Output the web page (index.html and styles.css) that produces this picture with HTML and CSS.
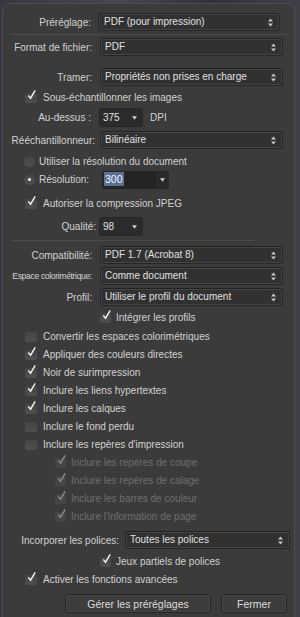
FILE: index.html
```html
<!DOCTYPE html>
<html lang="fr">
<head>
	<meta charset="UTF-8">
	<title>Exporter PDF</title>
	<link rel="stylesheet" href="styles.css">
</head>
<body>
<div class="window">

	<div class="row field-row preset">
		<span class="lbl">Préréglage:</span>
		<div class="popup">PDF (pour impression)<svg class="updown" viewBox="0 0 5 9"><polygon points="0,3.5 2.5,0.5 5,3.5"/><polygon points="0,5.5 2.5,8.5 5,5.5"/></svg></div>
	</div>
	<div class="sep"></div>

	<div class="row field-row r-format">
		<span class="lbl">Format de fichier:</span>
		<div class="popup">PDF<svg class="updown" viewBox="0 0 5 9"><polygon points="0,3.5 2.5,0.5 5,3.5"/><polygon points="0,5.5 2.5,8.5 5,5.5"/></svg></div>
	</div>

	<div class="row field-row r-tramer">
		<span class="lbl">Tramer:</span>
		<div class="popup">Propriétés non prises en charge<svg class="updown" viewBox="0 0 5 9"><polygon points="0,3.5 2.5,0.5 5,3.5"/><polygon points="0,5.5 2.5,8.5 5,5.5"/></svg></div>
	</div>

	<div class="row check-row r-tight">
		<span class="box on"><svg class="tick" viewBox="0 0 12 12"><path d="M2.5 6.5 L5 9.5 L10 1"/></svg></span>
		<span>Sous-échantillonner les images</span>
	</div>

	<div class="row field-row r-above">
		<span class="lbl">Au-dessus :</span>
		<div class="combo">375<svg class="down" viewBox="0 0 6 4"><polygon points="0,0 6,0 3,4"/></svg></div>
		<span class="unit">DPI</span>
	</div>

	<div class="row field-row r-resample">
		<span class="lbl">Rééchantillonneur:</span>
		<div class="popup">Bilinéaire<svg class="updown" viewBox="0 0 5 9"><polygon points="0,3.5 2.5,0.5 5,3.5"/><polygon points="0,5.5 2.5,8.5 5,5.5"/></svg></div>
	</div>

	<div class="row radio-row r-docres">
		<span class="radio"></span>
		<span>Utiliser la résolution du document</span>
	</div>

	<div class="row radio-row r-res">
		<span class="radio on"></span>
		<span class="res-lbl">Résolution:</span>
		<div class="textcombo"><span class="txt"><span class="sel">300</span></span><span class="arrow"><svg class="down" viewBox="0 0 6 4"><polygon points="0,0 6,0 3,4"/></svg></span></div>
	</div>

	<div class="row check-row r-jpeg">
		<span class="box on"><svg class="tick" viewBox="0 0 12 12"><path d="M2.5 6.5 L5 9.5 L10 1"/></svg></span>
		<span>Autoriser la compression JPEG</span>
	</div>

	<div class="row field-row r-quality">
		<span class="lbl">Qualité:</span>
		<div class="combo">98<svg class="down" viewBox="0 0 6 4"><polygon points="0,0 6,0 3,4"/></svg></div>
	</div>

	<div class="sep sep2"></div>

	<div class="row field-row r-compat">
		<span class="lbl">Compatibilité:</span>
		<div class="popup">PDF 1.7 (Acrobat 8)<svg class="updown" viewBox="0 0 5 9"><polygon points="0,3.5 2.5,0.5 5,3.5"/><polygon points="0,5.5 2.5,8.5 5,5.5"/></svg></div>
	</div>

	<div class="row field-row r-tight">
		<span class="lbl squeezed">Espace colorimétrique:</span>
		<div class="popup">Comme document<svg class="updown" viewBox="0 0 5 9"><polygon points="0,3.5 2.5,0.5 5,3.5"/><polygon points="0,5.5 2.5,8.5 5,5.5"/></svg></div>
	</div>

	<div class="row field-row r-tight">
		<span class="lbl">Profil:</span>
		<div class="popup">Utiliser le profil du document<svg class="updown" viewBox="0 0 5 9"><polygon points="0,3.5 2.5,0.5 5,3.5"/><polygon points="0,5.5 2.5,8.5 5,5.5"/></svg></div>
	</div>

	<div class="row check-row inset r-tight">
		<span class="box on"><svg class="tick" viewBox="0 0 12 12"><path d="M2.5 6.5 L5 9.5 L10 1"/></svg></span>
		<span>Intégrer les profils</span>
	</div>

	<div class="row check-row r-tight">
		<span class="box"></span>
		<span>Convertir les espaces colorimétriques</span>
	</div>
	<div class="row check-row">
		<span class="box on"><svg class="tick" viewBox="0 0 12 12"><path d="M2.5 6.5 L5 9.5 L10 1"/></svg></span>
		<span>Appliquer des couleurs directes</span>
	</div>
	<div class="row check-row">
		<span class="box on"><svg class="tick" viewBox="0 0 12 12"><path d="M2.5 6.5 L5 9.5 L10 1"/></svg></span>
		<span>Noir de surimpression</span>
	</div>
	<div class="row check-row">
		<span class="box on"><svg class="tick" viewBox="0 0 12 12"><path d="M2.5 6.5 L5 9.5 L10 1"/></svg></span>
		<span>Inclure les liens hypertextes</span>
	</div>
	<div class="row check-row">
		<span class="box on"><svg class="tick" viewBox="0 0 12 12"><path d="M2.5 6.5 L5 9.5 L10 1"/></svg></span>
		<span>Inclure les calques</span>
	</div>
	<div class="row check-row">
		<span class="box"></span>
		<span>Inclure le fond perdu</span>
	</div>
	<div class="row check-row">
		<span class="box"></span>
		<span>Inclure les repères d'impression</span>
	</div>

	<div class="row check-row sub off">
		<span class="box on"><svg class="tick" viewBox="0 0 12 12"><path d="M2.5 6.5 L5 9.5 L10 1"/></svg></span>
		<span>Inclure les repères de coupe</span>
	</div>
	<div class="row check-row sub off">
		<span class="box on"><svg class="tick" viewBox="0 0 12 12"><path d="M2.5 6.5 L5 9.5 L10 1"/></svg></span>
		<span>Inclure les repères de calage</span>
	</div>
	<div class="row check-row sub off">
		<span class="box on"><svg class="tick" viewBox="0 0 12 12"><path d="M2.5 6.5 L5 9.5 L10 1"/></svg></span>
		<span>Inclure les barres de couleur</span>
	</div>
	<div class="row check-row sub off">
		<span class="box on"><svg class="tick" viewBox="0 0 12 12"><path d="M2.5 6.5 L5 9.5 L10 1"/></svg></span>
		<span>Inclure l'information de page</span>
	</div>

	<div class="row field-row r-fonts">
		<span class="lbl">Incorporer les polices:</span>
		<div class="popup">Toutes les polices<svg class="updown" viewBox="0 0 5 9"><polygon points="0,3.5 2.5,0.5 5,3.5"/><polygon points="0,5.5 2.5,8.5 5,5.5"/></svg></div>
	</div>

	<div class="row check-row inset r-subset">
		<span class="box on"><svg class="tick" viewBox="0 0 12 12"><path d="M2.5 6.5 L5 9.5 L10 1"/></svg></span>
		<span>Jeux partiels de polices</span>
	</div>
	<div class="row check-row">
		<span class="box on"><svg class="tick" viewBox="0 0 12 12"><path d="M2.5 6.5 L5 9.5 L10 1"/></svg></span>
		<span>Activer les fonctions avancées</span>
	</div>

	<div class="buttons">
		<button type="button" class="btn manage">Gérer les préréglages</button>
		<button type="button" class="btn close">Fermer</button>
	</div>

</div>
</body>
</html>
```

FILE: styles.css
```css
html, body {
	margin: 0;
	height: 100%;
	overflow: hidden;
}

body {
	background: linear-gradient(90deg, #3b3740 0%, #4a4650 40%, #34313a 70%, #433f48 100%);
	font-family: "Liberation Sans", Arial, sans-serif;
	font-size: 10px;
	color: #d2d2d2;
}

.window {
	margin: 3px 0 0 2px;
	width: 293px;
	height: 640px;
	background: #3b3b3b;
	border: 1px solid #4d4d4d;
	border-radius: 8px;
	padding-top: 8px;
	box-sizing: border-box;
}

/* every line of the dialog */
.row {
	display: flex;
	align-items: center;
	height: 18px;
	white-space: nowrap;
}

.field-row {
	height: 20px;
}

.lbl {
	width: 89px;
	text-align: right;
	flex: none;
}

.popup {
	position: relative;
	margin-left: 8px;
	width: 183px;
	height: 18px;
	box-sizing: border-box;
	padding-left: 4px;
	line-height: 16px;
	background: #313131;
	border: 1px solid #262626;
	border-top-color: #222;
	border-radius: 3px;
	box-shadow: inset 0 0 0 1px #444;
	color: #e0e0e0;
	font-size: 10px;
}

.updown {
	position: absolute;
	right: 6px;
	top: 3.5px;
	width: 5px;
	height: 9px;
	fill: #c8c8c8;
}

.sep {
	height: 1px;
	background: #4c4c4c;
	margin: 2px 4px 2px 7px;
}

.sep2 {
	margin: 4px 40px 4px 9px;
}

/* row offsets */
.preset .lbl { width: 88px; }
.preset .popup { margin-left: 7px; width: 182px; padding-left: 5px; }
.r-tramer { margin-top: 10px; }
.r-tight { margin-top: 1px; }
.r-above { margin-top: 1px; }
.r-above .lbl { width: 88px; }
.r-resample { margin-top: 3px; }
.r-resample .lbl { width: 92px; margin-right: -3px; }
.r-docres { margin-top: 2px; }
.r-res { height: 19px; }
.r-jpeg { margin-top: 5px; }
.r-quality { margin-top: 4px; }
.r-quality .lbl { width: 93px; }
.r-quality .combo { margin-left: 3px; }
.r-compat { margin-top: 0; }
.r-fonts { margin-top: 5px; }
.r-fonts .lbl { width: 116px; }
.r-fonts .popup { margin-left: 6px; width: 165px; }
.r-subset { margin-top: 2px; }

.squeezed {
	font-size: 8.6px;
	letter-spacing: -0.35px;
}

/* small drop-downs with one arrow */
.combo {
	position: relative;
	margin-left: 8px;
	width: 44px;
	height: 19px;
	box-sizing: border-box;
	padding-left: 3px;
	line-height: 17px;
	background: #2c2c2c;
	border: 1px solid #262626;
	border-radius: 3px;
	color: #e0e0e0;
	font-size: 10px;
}

.down {
	width: 5px;
	height: 4px;
	fill: #d0d0d0;
}

.combo .down {
	position: absolute;
	right: 5px;
	top: 7px;
}

.unit {
	margin-left: 7px;
}

/* resolution text field */
.res-lbl {
	width: 63px;
}

.textcombo {
	display: flex;
	width: 67px;
	height: 18px;
	background: #242424;
	border-radius: 2px;
}

.textcombo .txt {
	flex: 1;
	padding: 2px 0 0 2px;
	font-size: 10.5px;
}

.sel {
	background: #5b6f96;
	color: #f2f4fa;
	padding: 1px 1px;
}

.textcombo .arrow {
	width: 14px;
	display: flex;
	align-items: center;
	justify-content: center;
	background: #2a2a2a;
	border-left: 1px solid #1e1e1e;
}

/* checkboxes and radios */
.check-row {
	padding-left: 22px;
}

.box {
	position: relative;
	flex: none;
	width: 12px;
	height: 11px;
	margin-right: 6px;
	background: linear-gradient(#444, #4f4f4f);
	border-radius: 2px;
	box-shadow: inset 0 1px 0 #3a3a3a;
}

.tick {
	position: absolute;
	left: 1px;
	top: -3px;
	width: 11px;
	height: 12px;
	fill: none;
	stroke: #f4f4f4;
	stroke-width: 1.5;
}

.inset {
	padding-left: 97px;
}

.inset .box {
	width: 11px;
	margin-right: 5px;
}

.sub {
	padding-left: 52px;
}

.sub .box {
	width: 11px;
	margin-right: 5px;
	background: #464646;
}

.off {
	color: #6e6e6e;
}

.off .tick {
	stroke: #8a8a8a;
}

.radio-row {
	padding-left: 21px;
}

.radio {
	position: relative;
	flex: none;
	width: 11px;
	height: 11px;
	margin-right: 4px;
	border-radius: 50%;
	background: linear-gradient(#444, #505050);
}

.radio.on::after {
	content: "";
	position: absolute;
	left: 4px;
	top: 4px;
	width: 3px;
	height: 3px;
	border-radius: 50%;
	background: #f4f4f4;
}

/* bottom buttons */
.buttons {
	display: flex;
	gap: 10px;
	padding-left: 62px;
	margin-top: 6px;
}

.btn {
	height: 19px;
	padding: 0;
	font-family: inherit;
	font-size: 10.5px;
	color: #dcdcdc;
	background: #3d3d3d;
	border: 1px solid #262626;
	border-radius: 3px;
	box-shadow: inset 0 0 0 1px #474747;
}

.manage { width: 146px; }
.close { width: 66px; }
```
